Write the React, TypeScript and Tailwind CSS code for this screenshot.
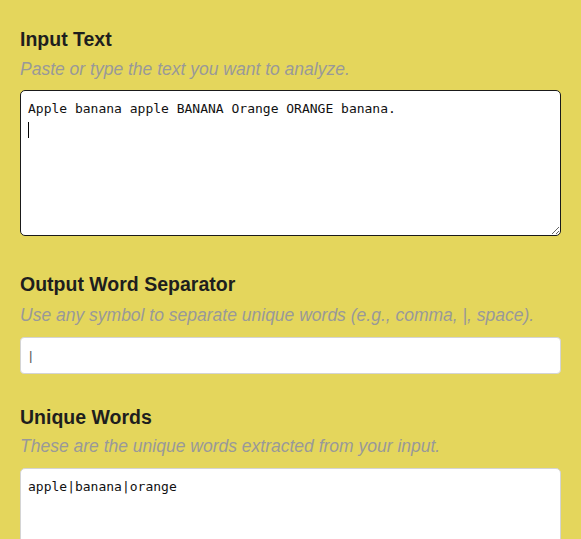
import React from 'react';

const inputText = 'Apple banana apple BANANA Orange ORANGE banana.\n';

export default function App() {
  return (
    <div className="min-h-screen bg-[#e4d65c] px-5 pt-[27px] font-['Liberation_Sans',Arial,sans-serif]">
      <section>
        <h2 className="text-[19.5px] font-bold leading-[24px] text-[#1e1e1e]">Input Text</h2>
        <p className="mt-2 text-[17.5px] italic leading-[20px] text-[#999]">
          Paste or type the text you want to analyze.
        </p>
        <div className="relative mt-[11px]">
          <textarea
            className="block h-[146px] w-full resize-y rounded-[5px] border border-[#1a1a1a] bg-white px-[7px] pt-2 font-['DejaVu_Sans_Mono',monospace] text-[13px] leading-[20px] text-[#111] outline-none"
            defaultValue={inputText}
          />
          {/* text cursor on the empty second line */}
          <span className="pointer-events-none absolute left-[8px] top-[32px] h-4 w-px bg-black" />
        </div>
      </section>

      <section className="mt-9">
        <h2 className="text-[19.5px] font-bold leading-[24px] text-[#1e1e1e]">Output Word Separator</h2>
        <p className="mt-[9px] text-[17.5px] italic leading-[20px] text-[#999]">
          Use any symbol to separate unique words (e.g., comma, |, space).
        </p>
        <input
          className="mt-3 block h-[37px] w-full rounded-[4px] border border-[#d4d4d4] bg-white px-2 text-[13.3px] text-[#555] outline-none"
          defaultValue="|"
        />
      </section>

      <section className="mt-[31px]">
        <h2 className="text-[19.5px] font-bold leading-[24px] text-[#1e1e1e]">Unique Words</h2>
        <p className="mt-[7px] text-[17.5px] italic leading-[20px] text-[#999]">
          These are the unique words extracted from your input.
        </p>
        <textarea
          readOnly
          className="mt-3 block h-[146px] w-full resize-y rounded-[5px] border border-[#d4d4d4] bg-white px-[7px] pt-2 font-['DejaVu_Sans_Mono',monospace] text-[13px] leading-[20px] text-[#111] outline-none"
          value="apple|banana|orange"
        />
      </section>
    </div>
  );
}
